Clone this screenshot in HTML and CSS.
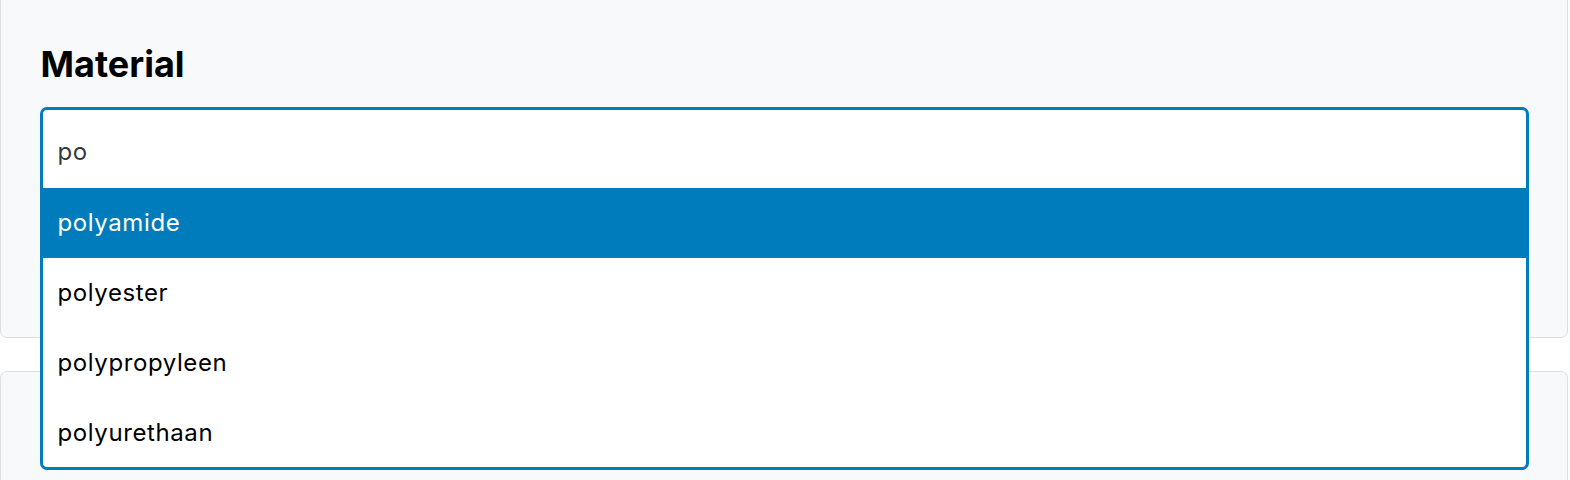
FILE: index.html
```html
<!DOCTYPE html>
<html lang="nl">
<head>
<meta charset="utf-8">
<title>Material</title>
<link rel="stylesheet" href="styles.css">
</head>
<body>
<div class="page">
  <section class="card">
    <h2 class="card-title">Material</h2>
    <div class="field">
      <div class="combobox">
        <div class="combo-input">po</div>
        <ul class="combo-list">
          <li class="combo-option is-active">polyamide</li>
          <li class="combo-option">polyester</li>
          <li class="combo-option">polypropyleen</li>
          <li class="combo-option">polyurethaan</li>
        </ul>
      </div>
    </div>
    <div class="field-extra"></div>
  </section>
  <section class="card card-next"></section>
</div>
</body>
</html>
```
FILE: styles.css
```css
html, body {
  margin: 0;
  padding: 0;
  background: #ffffff;
  font-family: Inter, "Noto Sans", "Liberation Sans", sans-serif;
  overflow: hidden;
}

.page {
  width: 1568px;
  margin-top: -30px;
  display: flex;
  flex-direction: column;
  gap: 32.5px;
}

.card {
  box-sizing: border-box;
  background: #f8f9fa;
  border: 1.5px solid #dcdee0;
  border-radius: 7px;
  padding: 72px 38.5px 38.5px;
}

.card-next {
  height: 300px;
}

.card-title {
  margin: 0 0 20.3px;
  padding-left: 1px;
  font-size: 36px;
  line-height: 43.2px;
  font-weight: 700;
  color: #000;
}

.field {
  position: relative;
  height: 82px;
}

.field-extra {
  height: 110px;
}

.combobox {
  position: absolute;
  top: 0;
  left: 0;
  right: 0;
  z-index: 2;
  box-sizing: border-box;
  border: 3.5px solid #007bbb;
  border-radius: 7px;
  background: #fff;
  overflow: hidden;
}

.combo-input {
  box-sizing: border-box;
  height: 78.5px;
  padding: 24.5px 15px 18px;
  font-size: 24px;
  line-height: 36px;
  letter-spacing: 0.5px;
  color: #343a40;
}

.combo-list {
  list-style: none;
  margin: 0;
  padding: 0;
}

.combo-option {
  box-sizing: border-box;
  height: 69.75px;
  display: flex;
  align-items: center;
  padding: 1px 15px 0;
  font-size: 24px;
  line-height: 36px;
  letter-spacing: 0.6px;
  color: #000;
}

.combo-option.is-active {
  background: #007bbb;
  color: #fff;
}
```
